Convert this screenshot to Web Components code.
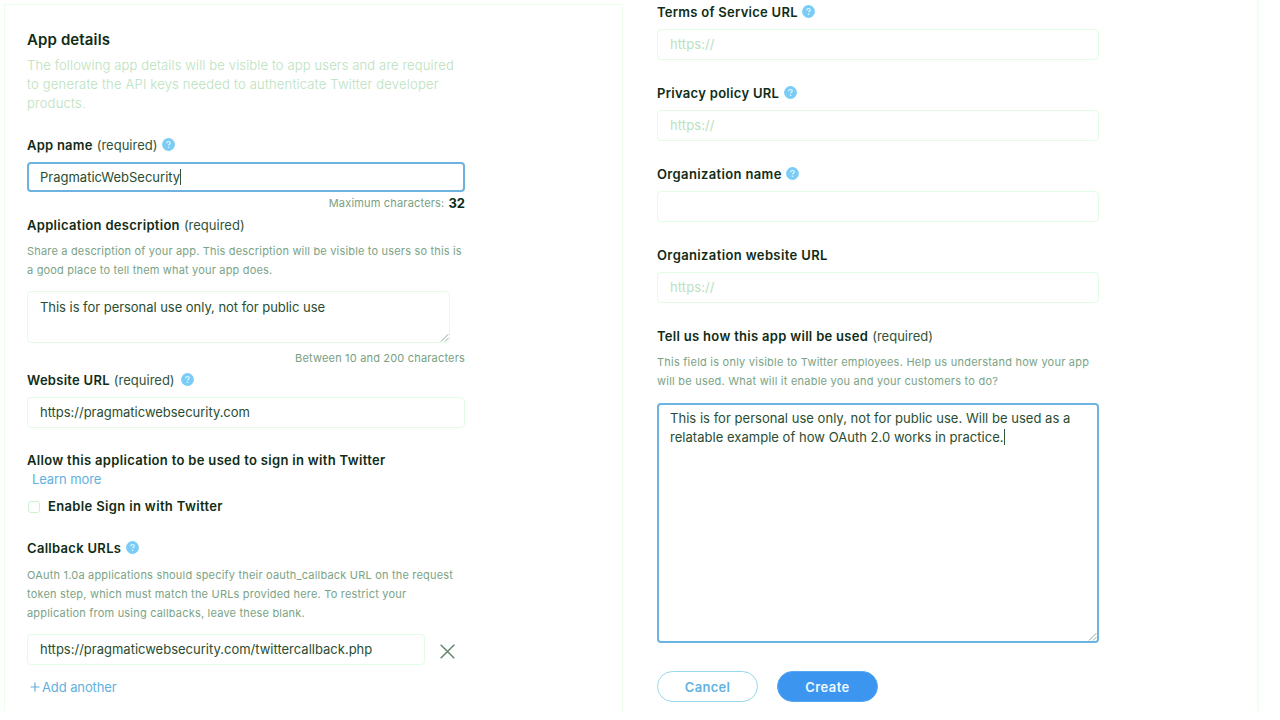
<!DOCTYPE html>
<html lang="en">
<head>
<meta charset="utf-8">
<title>App details</title>
<style>
html,body{margin:0;padding:0;background:#fefffe;height:720px;overflow:hidden}
body{font-family:Inter,"Liberation Sans",sans-serif;color:#1d3a23}
</style>
</head>
<body>
<app-page></app-page>
<script>
const define = (name, render) => customElements.define(name, class extends HTMLElement {
  constructor() {
    super();
    this.attachShadow({ mode: 'open' }).innerHTML = render(this);
  }
});

define('help-icon', () => `
<style>:host{display:block;width:13px;height:13px;flex:none}svg{display:block}</style>
<svg width="13" height="13" viewBox="0 0 13 13"><circle cx="6.5" cy="6.5" r="6.4" fill="#7accf7"/>
<path d="M4.7 5.3c0-1.2.8-1.8 1.8-1.8s1.8.6 1.8 1.5c0 1.1-1.7 1.2-1.7 2.3" fill="none" stroke="#e3f8ff" stroke-width="1.2"/><circle cx="6.6" cy="9.2" r=".8" fill="#e3f8ff"/></svg>`);

define('field-label', el => `
<style>
:host{display:flex;align-items:center;height:20px;font-size:13px;line-height:20px;white-space:nowrap}
b{font-weight:600;color:#102c17;letter-spacing:var(--ls,.3px)}
span{margin-left:4px;color:#31533a;letter-spacing:0}
help-icon{margin:-1px 0 0 var(--gap,5px)}
</style>
<b><slot></slot></b>${el.hasAttribute('required') ? '<span>(required)</span>' : ''}${el.hasAttribute('help') ? '<help-icon></help-icon>' : ''}`);

define('help-text', () => `
<style>:host{display:block;font-size:11px;line-height:19px;color:#7ca386;letter-spacing:.19px;white-space:nowrap}</style>
<slot></slot>`);

define('text-caret', () => `
<style>:host{display:inline-block;width:1px;height:16px;background:#31533a;vertical-align:-3px;margin-right:-1px}</style>`);

define('text-field', () => `
<style>
:host{display:flex;align-items:center;box-sizing:border-box;height:31px;border:1px solid #e2fde4;border-radius:4px;padding:0 12px;font-size:13px;line-height:19px;color:#2a4d32;white-space:nowrap}
:host([focused]){border:2px solid #6cb3e2;padding:0 11px}
:host([placeholder]){color:#bce0c1;letter-spacing:.1px}
</style>
<div><slot></slot></div>`);

define('text-box', () => `
<style>
:host{display:block;position:relative;box-sizing:border-box;border:1px solid #e2fde4;border-radius:4px;padding:6px 12px;font-size:13px;line-height:19px;color:#2a4d32;white-space:nowrap}
:host([focused]){border:2px solid #6cb3e2;padding:4px 11px}
svg{position:absolute;right:0;bottom:0}
</style>
<slot></slot>
<svg width="9" height="9" viewBox="0 0 9 9" fill="none" stroke="#8fab94"><path d="M1 8.5L8.3 1.2M5 8.5L8.3 5.2"/></svg>`);

define('char-note', () => `
<style>:host{display:flex;justify-content:flex-end;align-items:center;height:16px;font-size:11px;line-height:16px;color:#7a9f84;letter-spacing:.18px}
::slotted(b){font-size:13px;font-weight:700;color:#102c17;margin-left:4px;letter-spacing:0}</style><slot></slot>`);

define('check-row', () => `
<style>:host{display:flex;align-items:center;height:20px}
i{box-sizing:border-box;width:12px;height:12px;border:1px solid #cdf2d0;border-radius:3px;margin:1px 8px 0 1px}</style>
<i></i><field-label><slot></slot></field-label>`);

define('text-link', () => `
<style>:host{display:flex;align-items:center;height:20px;font-size:13px;line-height:20px;color:#62b0de;letter-spacing:-.1px}</style><slot></slot>`);

define('pill-button', () => `
<style>:host{display:flex;box-sizing:border-box;align-items:center;justify-content:center;width:101px;height:31px;border:1px solid #97d9ee;border-radius:16px;font-size:13px;font-weight:600;letter-spacing:.27px;color:#62b3df}
:host([primary]){background:#3c95ef;border-color:#55a8f0;color:#eefaff;letter-spacing:.4px}</style><slot></slot>`);

define('details-panel', () => `
<style>
:host{display:block;box-sizing:border-box;border:solid #ebfeeb;border-width:1px 1px 0 1px;padding:25px 0 0 22px}
.col{display:flex;flex-direction:column;width:438px}
h2{margin:0;font-size:15px;line-height:20px;font-weight:600;color:#102c17;letter-spacing:.12px}
.intro{margin-top:6px;font-size:13px;line-height:19px;font-weight:300;color:#bbe1c0;white-space:nowrap}
.intro div:nth-child(1){letter-spacing:.14px}
.intro div:nth-child(2),.intro div:nth-child(3){letter-spacing:.21px}
.cb{display:flex;align-items:center;margin-top:11px}
.cb text-field{width:398px}
.cb svg{margin:4px 0 0 15px}
</style>
<div class="col">
<h2>App details</h2>
<div class="intro"><div>The following app details will be visible to app users and are required</div><div>to generate the API keys needed to authenticate Twitter developer</div><div>products.</div></div>
<field-label style="margin-top:22px;--ls:.24px" required help>App name</field-label>
<text-field style="margin-top:7px;height:30px" focused>PragmaticWebSecurity<text-caret></text-caret></text-field>
<char-note style="margin-top:3px">Maximum characters: <b>32</b></char-note>
<field-label style="margin-top:4px" required>Application description</field-label>
<help-text style="margin-top:7px;letter-spacing:.18px">Share a description of your app. This description will be visible to users so this is<br>a good place to tell them what your app does.</help-text>
<text-box style="margin-top:11px;width:423px;height:52px;letter-spacing:-.04px">This is for personal use only, not for public use</text-box>
<char-note style="margin-top:7px">Between 10 and 200 characters</char-note>
<field-label style="margin-top:4px;--ls:.28px;--gap:6px" required help>Website URL</field-label>
<text-field style="margin-top:7px;letter-spacing:-.02px">https://pragmaticwebsecurity.com</text-field>
<field-label style="margin-top:22px;--ls:.32px">Allow this application to be used to sign in with Twitter</field-label>
<text-link style="margin:-1px 0 0 5px">Learn more</text-link>
<check-row style="margin-top:7px;--ls:.35px">Enable Sign in with Twitter</check-row>
<field-label style="margin-top:22px" help>Callback URLs</field-label>
<help-text style="margin-top:8px;letter-spacing:.195px">OAuth 1.0a applications should specify their oauth_callback URL on the request<br>token step, which must match the URLs provided here. To restrict your<br>application from using callbacks, leave these blank.</help-text>
<div class="cb"><text-field>https://pragmaticwebsecurity.com/twittercallback.php</text-field>
<svg width="15" height="15" viewBox="0 0 15 15" fill="none" stroke="#64866f" stroke-width="1.5"><path d="M.7.7l13.6 13.6M14.3.7L.7 14.3"/></svg></div>
<text-link style="margin:12px 0 0 3px"><svg width="10" height="10" viewBox="0 0 10 10" style="margin-right:2px" stroke="#62b0de" stroke-width="1.2"><path d="M5 .5v9M.5 5h9"/></svg>Add another</text-link>
</div>`);

define('usage-panel', () => `
<style>
:host{display:block;box-sizing:border-box;border-right:2px solid #f0fef0;padding:2px 0 0 34px}
.col{display:flex;flex-direction:column;width:442px}
.col>field-label+text-field{margin-top:7px}
.col>text-field+field-label{margin-top:23px}
.actions{display:flex;gap:19px;margin-top:28px}
</style>
<div class="col">
<field-label style="--ls:.27px;--gap:4px" help>Terms of Service URL</field-label>
<text-field placeholder>https://</text-field>
<field-label help>Privacy policy URL</field-label>
<text-field placeholder>https://</text-field>
<field-label style="--ls:.36px;--gap:4px" help>Organization name</field-label>
<text-field></text-field>
<field-label style="--ls:.38px">Organization website URL</field-label>
<text-field placeholder>https://</text-field>
<field-label required>Tell us how this app will be used</field-label>
<help-text style="margin-top:7px;letter-spacing:.23px">This field is only visible to Twitter employees. Help us understand how your app<br>will be used. What will it enable you and your customers to do?</help-text>
<text-box focused style="margin-top:12px;height:240px;letter-spacing:.03px">This is for personal use only, not for public use. Will be used as a<br>relatable example of how OAuth 2.0 works in practice.<text-caret></text-caret></text-box>
<div class="actions"><pill-button>Cancel</pill-button><pill-button primary>Create</pill-button></div>
</div>`);

define('app-page', () => `
<style>
:host{display:grid;grid-template-columns:619px 1fr;height:711px;box-sizing:border-box;padding:0 21px 0 4px}
details-panel{margin-top:4px}
</style>
<details-panel></details-panel><usage-panel></usage-panel>`);
</script>
</body>
</html>
